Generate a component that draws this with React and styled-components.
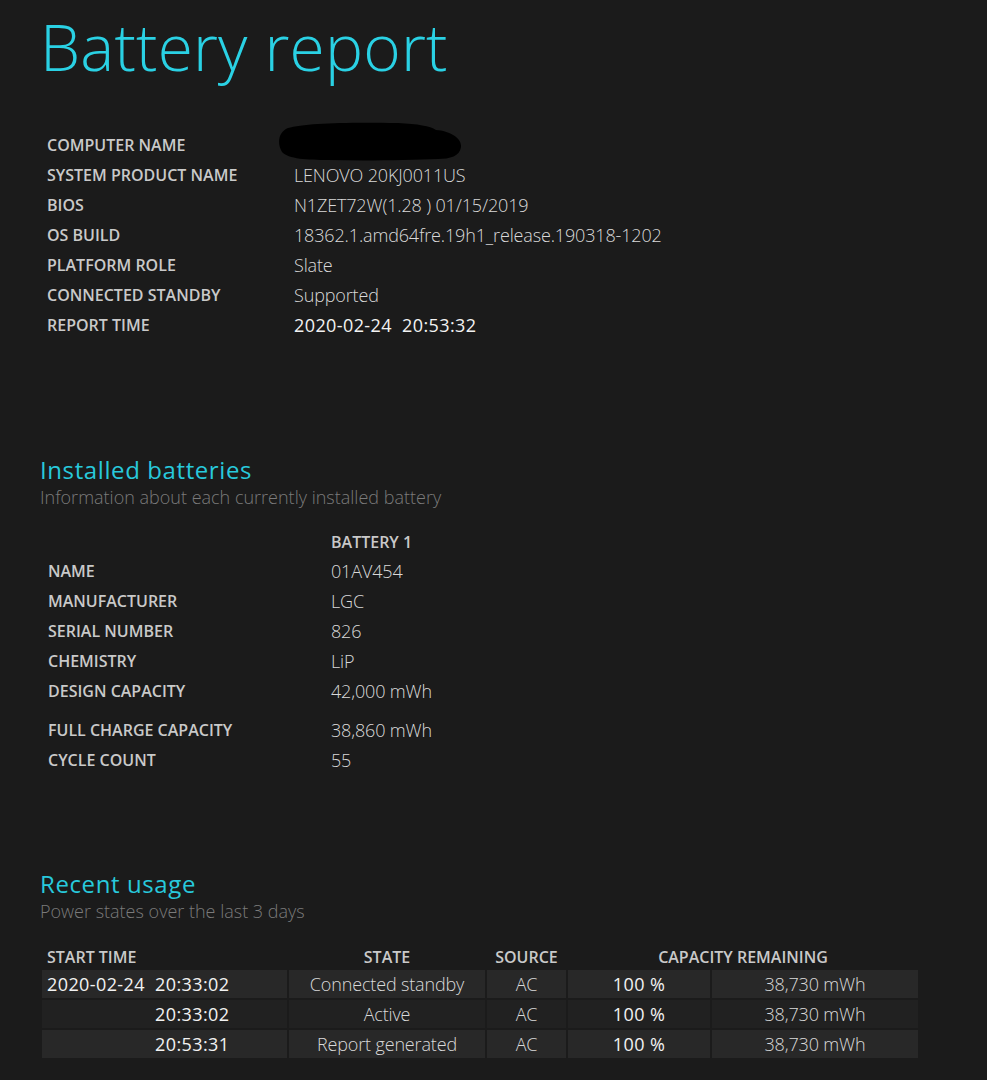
import React from "react";
import styled, { createGlobalStyle } from "styled-components";

const Global = createGlobalStyle`
  html, body { margin: 0; padding: 0; background: #1b1b1b; }
  body { font-family: "Open Sans", "Noto Sans", sans-serif; color: #d6d6d6; }
`;

const Page = styled.div`
  width: 987px;
  height: 1080px;
  overflow: hidden;
  box-sizing: border-box;
  padding-left: 40px;
  background: #1b1b1b;
`;

const Title = styled.h1`
  margin: 0;
  padding-top: 7px;
  height: 130px;
  box-sizing: border-box;
  font-weight: 300;
  font-size: 64px;
  line-height: 80px;
  color: #2ad1e4;
  letter-spacing: 0.2px;
`;

const InfoList = styled.div`
  display: flex;
  flex-direction: column;
  padding-left: ${(p) => p.$indent}px;
`;

const InfoRow = styled.div`
  display: grid;
  grid-template-columns: ${(p) => p.$labelWidth}px auto;
  height: ${(p) => p.$height || 30}px;
  margin-top: ${(p) => p.$gapBefore || 0}px;
  align-items: center;
`;

const Label = styled.div`
  font-weight: 600;
  font-size: 16px;
  color: #c9c9c9;
  text-transform: uppercase;
  white-space: nowrap;
`;

const Value = styled.div`
  position: relative;
  font-weight: ${(p) => (p.$strong ? 400 : 300)};
  font-size: 18px;
  letter-spacing: ${(p) => (p.$strong ? "0.4px" : "-0.15px")};
  color: ${(p) => (p.$strong ? "#f2f2f2" : "#d9d9d9")};
  white-space: pre;
`;

const Redaction = styled.svg`
  position: absolute;
  left: -16px;
  top: -23px;
`;

const Section = styled.section`
  padding-top: ${(p) => p.$top}px;
`;

const Heading = styled.h2`
  margin: 0;
  font-weight: 400;
  font-size: 24px;
  line-height: 30px;
  letter-spacing: 0.6px;
  color: #28c9dc;
`;

const Sub = styled.div`
  font-weight: 300;
  font-size: 18px;
  line-height: 24px;
  color: #7a7a7a;
`;

const UsageTable = styled.div`
  margin-top: ${(p) => p.$top}px;
  margin-left: 2px;
  display: grid;
  grid-template-columns: 245px 196px 79px 142px 206px;
  column-gap: 2px;
  row-gap: 2px;
  width: 876px;
`;

const HeadCell = styled.div`
  height: 26px;
  box-sizing: border-box;
  padding-top: 3px;
  display: flex;
  align-items: center;
  justify-content: ${(p) => (p.$left ? "flex-start" : "center")};
  padding-left: ${(p) => (p.$left ? 5 : 0)}px;
  grid-column: ${(p) => (p.$span ? `span ${p.$span}` : "auto")};
  font-weight: 600;
  font-size: 16px;
  color: #c9c9c9;
  white-space: nowrap;
`;

const Cell = styled.div`
  height: 28px;
  display: flex;
  align-items: center;
  justify-content: ${(p) => (p.$left ? "flex-start" : "center")};
  padding-left: ${(p) => (p.$left ? 5 : 0)}px;
  background: ${(p) => (p.$odd ? "#282828" : "#212121")};
  font-size: 18px;
  letter-spacing: ${(p) => (p.$strong ? "0.4px" : "-0.15px")};
  font-weight: ${(p) => (p.$strong ? 400 : 300)};
  color: ${(p) => (p.$strong ? "#f2f2f2" : "#d9d9d9")};
  white-space: pre;
`;

const Hidden = styled.span`
  visibility: hidden;
`;

const sysInfo = [
  ["Computer name", null],
  ["System product name", "LENOVO 20KJ0011US"],
  ["BIOS", "N1ZET72W(1.28 ) 01/15/2019"],
  ["OS build", "18362.1.amd64fre.19h1_release.190318-1202"],
  ["Platform role", "Slate"],
  ["Connected standby", "Supported"],
  ["Report time", "2020-02-24  20:53:32", true],
];

const battery = [
  ["Name", "01AV454"],
  ["Manufacturer", "LGC"],
  ["Serial number", "826"],
  ["Chemistry", "LiP"],
  ["Design capacity", "42,000 mWh"],
  ["Full charge capacity", "38,860 mWh", 9],
  ["Cycle count", "55"],
];

const usage = [
  { date: "2020-02-24", showDate: true, time: "20:33:02", state: "Connected standby" },
  { date: "2020-02-24", showDate: false, time: "20:33:02", state: "Active" },
  { date: "2020-02-24", showDate: false, time: "20:53:31", state: "Report generated" },
];

function RedactionBlob() {
  return (
    <Redaction width="186" height="40" viewBox="0 0 186 40">
      <path
        d="M10 6 C26 1 70 0 120 1 C140 2 152 4 158 8 C172 9 184 16 183 25 C182 34 172 37 160 37 C130 38 90 39 50 38 C30 38 10 37 4 30 C-1 22 0 10 10 6 Z"
        fill="#000"
      />
    </Redaction>
  );
}

export default function App() {
  return (
    <>
      <Global />
      <Page>
        <Title>Battery report</Title>

        <InfoList $indent={7}>
          {sysInfo.map(([label, value, strong]) => (
            <InfoRow key={label} $labelWidth={247}>
              <Label>{label}</Label>
              <Value $strong={strong}>{value === null ? <RedactionBlob /> : value}</Value>
            </InfoRow>
          ))}
        </InfoList>

        <Section $top={115}>
          <Heading>Installed batteries</Heading>
          <Sub>Information about each currently installed battery</Sub>
          <InfoList $indent={8}>
            <InfoRow $labelWidth={283} $height={28} $gapBefore={19}>
              <span />
              <Label>Battery 1</Label>
            </InfoRow>
            {battery.map(([label, value, gap]) => (
              <InfoRow key={label} $labelWidth={283} $gapBefore={gap}>
                <Label>{label}</Label>
                <Value>{value}</Value>
              </InfoRow>
            ))}
          </InfoList>
        </Section>

        <Section $top={94}>
          <Heading>Recent usage</Heading>
          <Sub>Power states over the last 3 days</Sub>
          <UsageTable $top={19}>
            <HeadCell $left>START TIME</HeadCell>
            <HeadCell>STATE</HeadCell>
            <HeadCell>SOURCE</HeadCell>
            <HeadCell $span={2}>CAPACITY REMAINING</HeadCell>
            {usage.map((u, i) => {
              const odd = i % 2 === 0;
              return (
                <React.Fragment key={i}>
                  <Cell $left $odd={odd} $strong>
                    {u.showDate ? u.date : <Hidden>{u.date}</Hidden>}
                    {"  " + u.time}
                  </Cell>
                  <Cell $odd={odd}>{u.state}</Cell>
                  <Cell $odd={odd}>AC</Cell>
                  <Cell $odd={odd} $strong>100 %</Cell>
                  <Cell $odd={odd}>38,730 mWh</Cell>
                </React.Fragment>
              );
            })}
          </UsageTable>
        </Section>
      </Page>
    </>
  );
}
